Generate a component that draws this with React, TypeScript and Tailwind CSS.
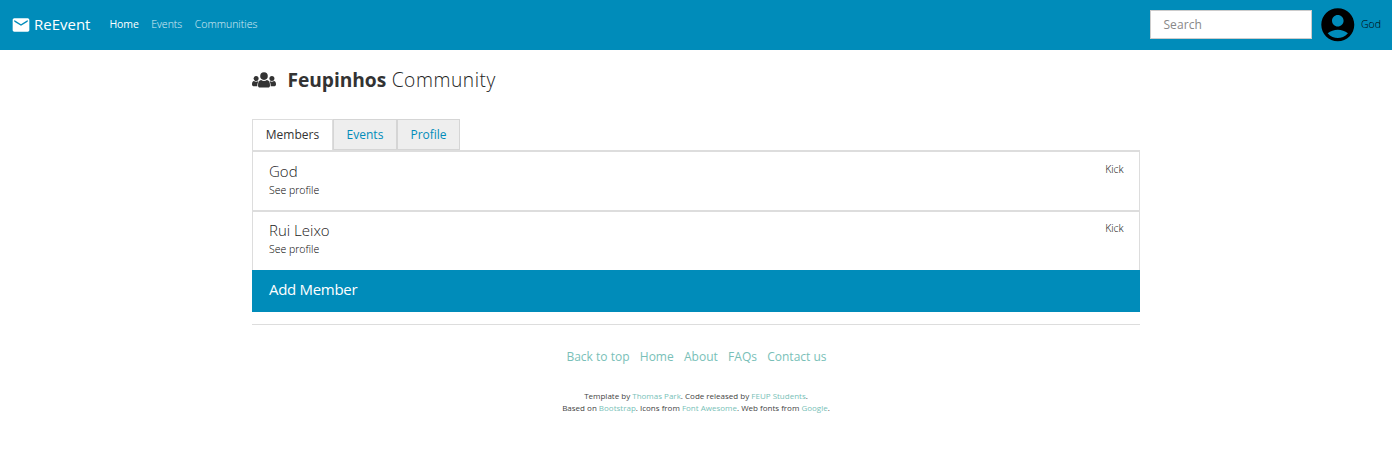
import { MdAccountCircle, MdEmail } from "react-icons/md";

const members = ["God", "Rui Leixo"];

function UsersIcon() {
  return (
    <svg viewBox="0 0 24 16" className="mt-[6px] mr-[12px] h-[16px] w-[24px]" fill="#333">
      <circle cx="12" cy="4.1" r="3.8" />
      <path d="M6 13.2C6 10 7.2 8.1 9.1 8C10.8 9.3 13.2 9.3 14.9 8C16.8 8.1 18 10 18 13.2C18 14.8 17.4 15.6 16 15.6H8C6.6 15.6 6 14.8 6 13.2Z" />
      <circle cx="4.1" cy="6.6" r="2.5" />
      <circle cx="19.9" cy="6.6" r="2.5" />
      <path d="M0 12.3C0 10.4.7 9.1 2 9C3.3 9.9 4.8 9.9 6 9.2L6.4 9.5C5.6 10.7 5.3 12.2 5.3 14.2H1.4C.5 14.2 0 13.4 0 12.3Z" />
      <path d="M24 12.3C24 10.4 23.3 9.1 22 9C20.7 9.9 19.2 9.9 18 9.2L17.6 9.5C18.4 10.7 18.7 12.2 18.7 14.2H22.6C23.5 14.2 24 13.4 24 12.3Z" />
    </svg>
  );
}

function Navbar() {
  return (
    <nav className="flex h-[50px] items-center bg-[#008cba] text-white">
      <a href="#" className="ml-[10.6px] flex items-center pb-[2px] text-[15px] leading-[24px]">
        <MdEmail className="mt-[2px] mr-[3.4px] size-[20px]" />
        ReEvent
      </a>
      <div className="ml-[19px] flex gap-[12.5px] pb-[2px] text-[10.5px] leading-[18px]">
        <a href="#" className="tracking-[-0.1px]">Home</a>
        <a href="#" className="font-light text-white/85">Events</a>
        <a href="#" className="font-light text-white/85">Communities</a>
      </div>
      <input
        type="text"
        placeholder="Search"
        className="mb-px ml-auto h-[29px] w-[162px] border border-[#ccc] bg-white px-[12px] text-[12px] tracking-[0.1px] text-[#222] placeholder:text-[#888]"
      />
      <MdAccountCircle className="ml-[6px] size-[39.6px] text-black" />
      <a href="#" className="mr-[11px] ml-[3px] text-[10.5px] font-light text-black">God</a>
    </nav>
  );
}

function MemberRow({ name }: { name: string }) {
  return (
    <li className="flex justify-between border-x border-[#ddd] px-[16px] pt-[9px] text-[#222] not-last:h-[60px] not-last:border-b-2 last:h-[58px] last:pt-[8px]">
      <div>
        <h2 className="text-[15px] leading-[21px] font-light">{name}</h2>
        <a href="#" className="block text-[10.5px] leading-[16px] font-light text-black">See profile</a>
      </div>
      <a href="#" className="mr-[-0.5px] text-[10.5px] leading-[16px] font-light tracking-[-0.1px] text-black">Kick</a>
    </li>
  );
}

export default function App() {
  return (
    <div className="min-h-[463px] bg-white font-['Open_Sans',sans-serif]">
      <Navbar />
      <main className="mx-auto w-[888px]">
        <h1 className="flex h-[69px] items-start pt-[16px] text-[19.2px] leading-[28px] font-light text-[#222]">
          <UsersIcon />
          <span className="-ml-[0.5px]">
            <b className="font-bold tracking-[-0.05px] text-[#333]">Feupinhos</b>{" "}
            <span className="ml-[0.5px] tracking-[0.55px]">Community</span>
          </span>
        </h1>
        <div className="flex h-[31px] text-[12px] leading-[30px]">
          <a href="#" className="w-[81px] border-x border-t border-[#ddd] text-center text-[#333]">Members</a>
          <a href="#" className="w-[64px] border border-[#d5d5d5] bg-[#eee] text-center text-[#008cba]">Events</a>
          <a href="#" className="w-[63px] border border-[#d5d5d5] bg-[#eee] text-center text-[#008cba]">Profile</a>
        </div>
        <ul className="border-t-2 border-[#ddd]">
          {members.map((name) => <MemberRow key={name} name={name} />)}
        </ul>
        <button className="block h-[42px] w-full bg-[#008cba] px-[17px] pb-[4px] text-left text-[15px] tracking-[-0.3px] text-white">
          Add Member
        </button>
        <hr className="mt-[12px] border-[#ddd]" />
        <footer className="pt-[23px] text-center">
          <div className="flex justify-center gap-[10.3px] pl-px text-[12px] leading-[18px] text-[#79bfb8]">
            <a href="#">Back to top</a>
            <a href="#">Home</a>
            <a href="#">About</a>
            <a href="#">FAQs</a>
            <a href="#">Contact us</a>
          </div>
          <p className="mt-[24px] text-[8px] leading-[12px] text-[#444]">
            Template by <a href="#" className="text-[#79bfb8]">Thomas Park</a>. Code released by <a href="#" className="text-[#79bfb8]">FEUP Students</a>.<br />
            Based on <a href="#" className="text-[#79bfb8]">Bootstrap</a>. Icons from <a href="#" className="text-[#79bfb8]">Font Awesome</a>. Web fonts from <a href="#" className="text-[#79bfb8]">Google</a>.
          </p>
        </footer>
      </main>
    </div>
  );
}
